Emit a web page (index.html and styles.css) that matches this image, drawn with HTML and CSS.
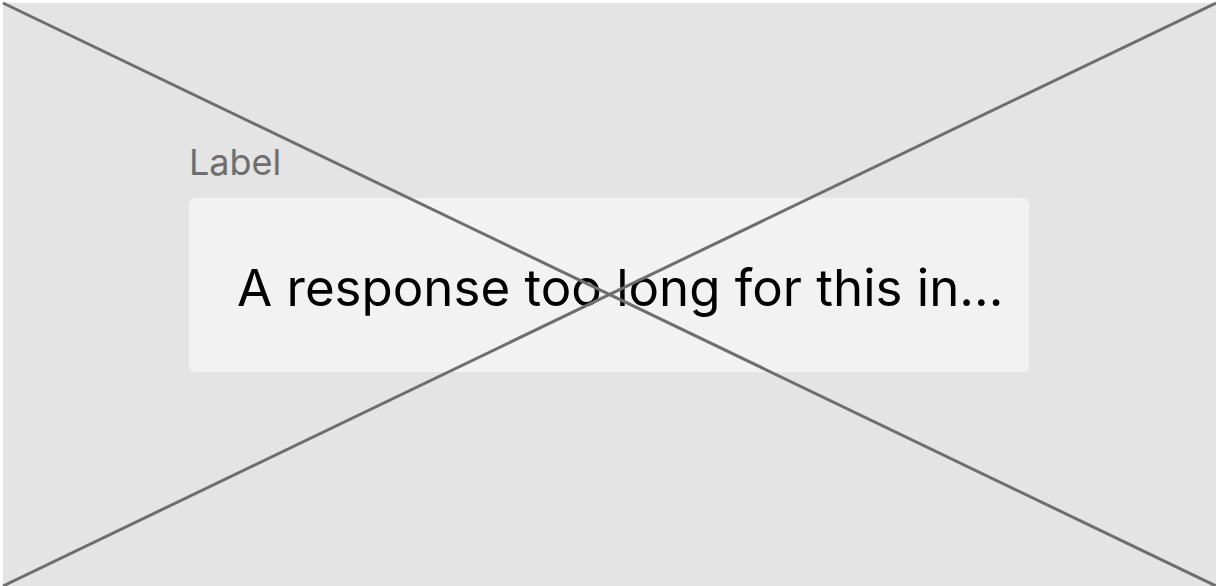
FILE: index.html
```html
<!DOCTYPE html>
<html lang="en">
<head>
<meta charset="utf-8">
<title>Text field</title>
<link rel="stylesheet" href="styles.css">
</head>
<body>
<main class="example">
  <div class="field">
    <label class="field-label" for="response">Label</label>
    <input class="field-input" id="response" type="text" value="A response too long for this in...">
  </div>
  <svg class="cross" aria-hidden="true">
    <line x1="0" y1="0" x2="100%" y2="100%"/>
    <line x1="0" y1="100%" x2="100%" y2="0"/>
  </svg>
</main>
</body>
</html>
```

FILE: styles.css
```css
* {
  box-sizing: border-box;
}

body {
  margin: 0;
  background: #fff;
  font-family: Inter, sans-serif;
}

.example {
  position: relative;
  min-height: 100vh;
  padding: 139px 187px 0 186px;
  border: 0 solid #fff;
  border-width: 3px 0 0 3px;
  background: #e4e4e4;
  background-clip: padding-box;
}

.field {
  display: flex;
  flex-direction: column;
  gap: 16px;
}

.field-label {
  color: #6e6e6e;
  font-size: 36px;
  line-height: 40px;
}

.field-input {
  width: 100%;
  height: 174px;
  padding: 4px 16px 0 48px;
  border: 0;
  border-radius: 6px;
  background: #f2f2f2;
  color: #000;
  font-family: inherit;
  font-size: 51px;
}

.cross {
  position: absolute;
  inset: 0;
  width: 100%;
  height: 100%;
  overflow: visible;
  stroke: #6e6e6e;
  stroke-width: 3;
  pointer-events: none;
}
```
